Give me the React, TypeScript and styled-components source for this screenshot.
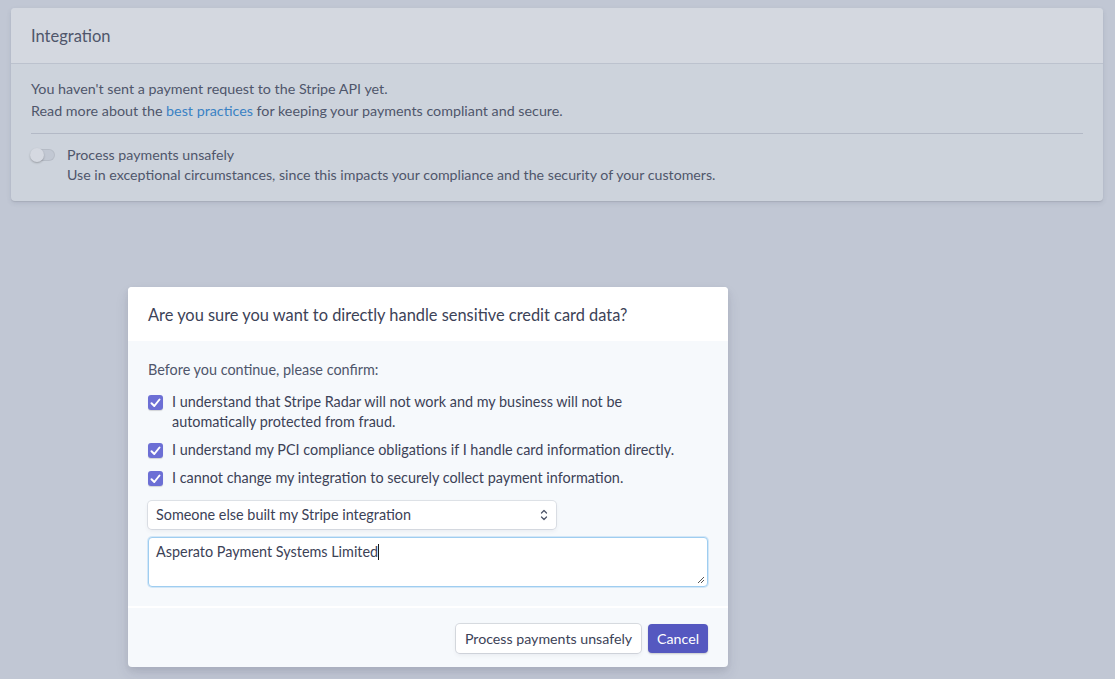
import React from "react";
import styled, { createGlobalStyle } from "styled-components";

const GlobalStyle = createGlobalStyle`
  * { box-sizing: border-box; }
  body {
    margin: 0;
    background: #c1c7d4;
    font-family: "Lato", "Noto Sans", sans-serif;
    color: #4f566b;
    -webkit-font-smoothing: antialiased;
  }
`;

const Page = styled.div`
  min-height: 679px;
  padding: 8px 12px 0 11px;
`;

const Card = styled.section`
  background: #cdd3dc;
  border-radius: 4px;
  box-shadow: 0 2px 5px rgba(60, 66, 87, 0.12), 0 1px 1px rgba(0, 0, 0, 0.08);
  overflow: hidden;
`;

const CardHeader = styled.header`
  height: 56px;
  display: flex;
  align-items: center;
  padding: 0 20px;
  background: #d4d8e0;
  border-bottom: 1px solid #bcc2ce;
  font-size: 16.5px;
  color: #4f566b;
`;

const CardBody = styled.div`
  padding: 14px 20px 16px;
  font-size: 14.3px;
  line-height: 22px;
`;

const Paragraph = styled.p`
  margin: 0;
`;

const Link = styled.a`
  color: #3a82c4;
  text-decoration: none;
`;

const Divider = styled.hr`
  border: 0;
  border-top: 1px solid #b3b9c6;
  margin: 11px 0 11px;
`;

const ToggleRow = styled.div`
  display: flex;
  gap: 12px;
  line-height: 20px;
  font-size: 14.2px;
`;

const Toggle = styled.span`
  position: relative;
  flex-shrink: 0;
  width: 24px;
  height: 12px;
  margin-top: 4px;
  border-radius: 6px;
  background: #c2c8d3;
  box-shadow: inset 0 0 0 1px rgba(0, 0, 0, 0.06);
  &::after {
    content: "";
    position: absolute;
    left: -1px;
    top: -1px;
    width: 14px;
    height: 14px;
    border-radius: 50%;
    background: #d5d9e1;
    box-shadow: 0 1px 2px rgba(0, 0, 0, 0.25);
  }
`;

const ToggleText = styled.div`
  display: flex;
  flex-direction: column;
`;

const Overlay = styled.div`
  position: absolute;
  top: 287px;
  left: 128px;
`;

const Modal = styled.div`
  width: 600px;
  border-radius: 4px;
  overflow: hidden;
  background: #f6f9fc;
  box-shadow: 0 7px 14px rgba(50, 50, 93, 0.1), 0 3px 6px rgba(0, 0, 0, 0.07);
`;

const ModalHeader = styled.header`
  height: 54px;
  display: flex;
  align-items: center;
  padding: 0 20px;
  background: #ffffff;
  font-size: 16.4px;
  color: #3c4257;
`;

const ModalBody = styled.div`
  padding: 19px 20px 19px;
  font-size: 14.4px;
  line-height: 20px;
  border-bottom: 2px solid #ffffff;
`;

const Intro = styled.p`
  margin: 0 0 12px;
`;

const CheckList = styled.div`
  display: flex;
  flex-direction: column;
  gap: 8px;
  margin-bottom: 13px;
`;

const CheckRow = styled.label`
  display: flex;
  gap: 9px;
  color: #3c4257;
`;

const CheckBox = styled.span`
  flex-shrink: 0;
  width: 15px;
  height: 15px;
  margin-top: 3px;
  border-radius: 3px;
  background: #6c6fd5;
  display: flex;
  align-items: center;
  justify-content: center;
  box-shadow: 0 1px 1px rgba(0, 0, 0, 0.15);
`;

const Select = styled.div`
  width: 408px;
  height: 28px;
  display: flex;
  align-items: center;
  justify-content: space-between;
  padding: 0 8px;
  background: #ffffff;
  border-radius: 4px;
  box-shadow: 0 0 0 1px rgba(60, 66, 87, 0.12), 0 2px 4px rgba(60, 66, 87, 0.08);
  color: #3c4257;
  margin-bottom: 8px;
`;

const TextArea = styled.div`
  position: relative;
  width: 560px;
  height: 50px;
  padding: 4px 7px;
  background: #ffffff;
  border: 1px solid #9fcdf0;
  border-radius: 4px;
  box-shadow: 0 0 0 1px rgba(159, 205, 240, 0.4);
  color: #3c4257;
`;

const Caret = styled.span`
  display: inline-block;
  width: 1px;
  height: 16px;
  background: #1a1a1a;
  vertical-align: -3px;
`;

const Grip = styled.svg`
  position: absolute;
  right: 2px;
  bottom: 2px;
`;

const ModalFooter = styled.footer`
  display: flex;
  justify-content: flex-end;
  gap: 7px;
  padding: 16px 20px 14px;
`;

const Button = styled.button<{ primary?: boolean }>`
  height: 29px;
  padding: 0 9px;
  border: 0;
  border-radius: 4px;
  font-family: inherit;
  font-size: 14.2px;
  background: ${({ primary }) => (primary ? "#5558c0" : "#ffffff")};
  color: ${({ primary }) => (primary ? "#ffffff" : "#3c4257")};
  box-shadow: ${({ primary }) =>
    primary
      ? "0 1px 2px rgba(0, 0, 0, 0.2)"
      : "0 0 0 1px rgba(60, 66, 87, 0.16), 0 2px 4px rgba(60, 66, 87, 0.08)"};
`;

const Check = () => (
  <CheckBox>
    <svg width="11" height="10" viewBox="0 0 11 10">
      <path d="M1.5 5.2 L4.3 8 L9.5 1.5" fill="none" stroke="#fff" strokeWidth="2" strokeLinecap="round" strokeLinejoin="round" />
    </svg>
  </CheckBox>
);

const checks = [
  "I understand that Stripe Radar will not work and my business will not be automatically protected from fraud.",
  "I understand my PCI compliance obligations if I handle card information directly.",
  "I cannot change my integration to securely collect payment information.",
];

export default function App() {
  return (
    <Page>
      <GlobalStyle />
      <Card>
        <CardHeader>Integration</CardHeader>
        <CardBody>
          <Paragraph>You haven't sent a payment request to the Stripe API yet.</Paragraph>
          <Paragraph>
            Read more about the <Link href="#">best practices</Link> for keeping your payments compliant and secure.
          </Paragraph>
          <Divider />
          <ToggleRow>
            <Toggle />
            <ToggleText>
              <span>Process payments unsafely</span>
              <span>Use in exceptional circumstances, since this impacts your compliance and the security of your customers.</span>
            </ToggleText>
          </ToggleRow>
        </CardBody>
      </Card>
      <Overlay>
        <Modal>
          <ModalHeader>Are you sure you want to directly handle sensitive credit card data?</ModalHeader>
          <ModalBody>
            <Intro>Before you continue, please confirm:</Intro>
            <CheckList>
              {checks.map((c) => (
                <CheckRow key={c}>
                  <Check />
                  <span>{c}</span>
                </CheckRow>
              ))}
            </CheckList>
            <Select>
              <span>Someone else built my Stripe integration</span>
              <svg width="8" height="14" viewBox="0 0 8 14">
                <path d="M1.5 5 L4 2.5 L6.5 5 M1.5 9 L4 11.5 L6.5 9" fill="none" stroke="#4f566b" strokeWidth="1.3" strokeLinecap="round" strokeLinejoin="round" />
              </svg>
            </Select>
            <TextArea>
              Asperato Payment Systems Limited<Caret />
              <Grip width="8" height="8" viewBox="0 0 8 8">
                <path d="M7 1 L1 7 M7 4 L4 7" stroke="#555" strokeWidth="1" />
              </Grip>
            </TextArea>
          </ModalBody>
          <ModalFooter>
            <Button>Process payments unsafely</Button>
            <Button primary>Cancel</Button>
          </ModalFooter>
        </Modal>
      </Overlay>
    </Page>
  );
}
